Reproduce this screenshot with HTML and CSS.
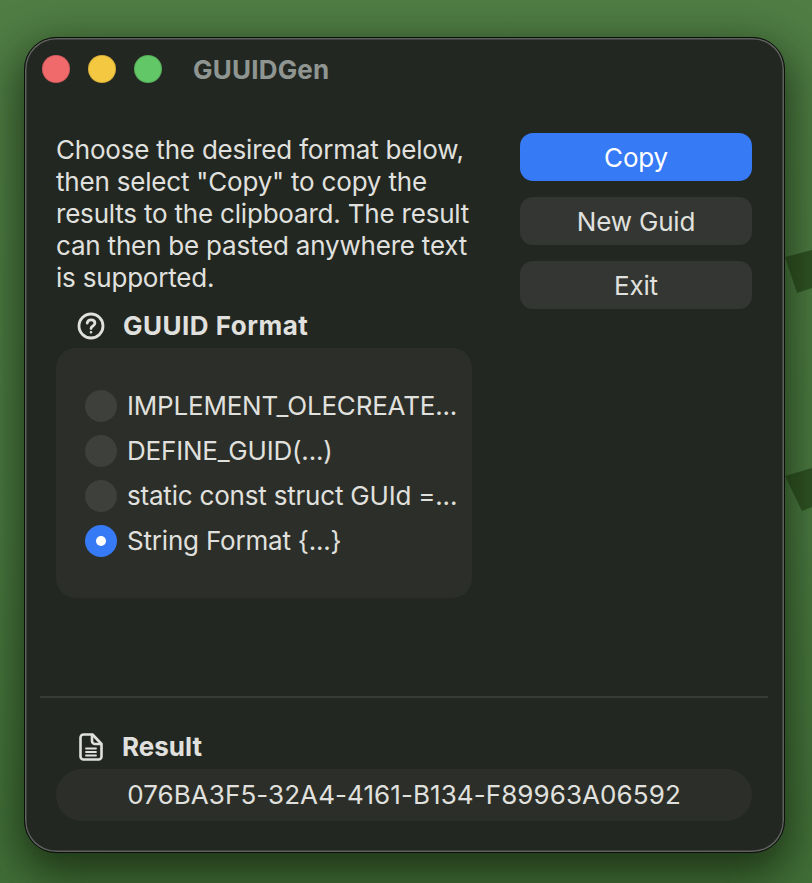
FILE: index.html
```html
<!DOCTYPE html>
<html lang="en">
<head>
<meta charset="utf-8">
<title>GUUIDGen</title>
<link rel="stylesheet" href="styles.css">
</head>
<body>
<svg class="shards" width="812" height="883" viewBox="0 0 812 883" aria-hidden="true">
  <polygon points="785,257 812,250 812,288 797,293"/>
  <polygon points="785,476 812,468 812,507 802,511"/>
</svg>
<main class="window">
  <header class="titlebar">
    <div class="lights">
      <span class="light red"></span>
      <span class="light yellow"></span>
      <span class="light green"></span>
    </div>
    <h1 class="title">GUUIDGen</h1>
  </header>
  <div class="content">
    <section class="left">
      <p class="intro">Choose the desired format below, then select "Copy" to copy the results to the clipboard. The result can then be pasted anywhere text is supported.</p>
      <div class="label format-label">
        <svg class="icon" width="28" height="28" viewBox="0 0 28 28" fill="none" stroke="#e0e1de" stroke-width="2.8" stroke-linecap="round" stroke-linejoin="round">
          <circle cx="14" cy="14" r="12"/>
          <path d="M10.200 11.200c.2-2.100 1.800-3.400 3.900-3.400 2.200 0 3.800 1.300 3.800 3.200 0 1.500-.8 2.300-2 3-1.200.7-1.900 1.300-1.900 2.600"/>
          <circle cx="14" cy="20.200" r=".6" fill="#e0e1de" stroke-width="1.400"/>
        </svg>
        <span>GUUID Format</span>
      </div>
      <div class="group">
        <div class="radio-row"><span class="radio"></span><span class="radio-text">IMPLEMENT_OLECREATE...</span></div>
        <div class="radio-row"><span class="radio"></span><span class="radio-text">DEFINE_GUID(...)</span></div>
        <div class="radio-row"><span class="radio"></span><span class="radio-text">static const struct GUId =...</span></div>
        <div class="radio-row"><span class="radio checked"></span><span class="radio-text">String Format {...}</span></div>
      </div>
    </section>
    <aside class="actions">
      <button class="btn primary">Copy</button>
      <button class="btn">New Guid</button>
      <button class="btn">Exit</button>
    </aside>
  </div>
  <hr class="divider">
  <section class="result">
    <div class="label result-label">
      <svg class="icon" width="24" height="28" viewBox="0 0 24 28" fill="none" stroke="#e0e1de" stroke-width="2.600" stroke-linecap="round" stroke-linejoin="round">
        <path d="M4.500 1.500h9l9 9.500v12.500a3 3 0 0 1-3 3h-15a3 3 0 0 1-3-3v-19a3 3 0 0 1 3-3z"/>
        <path d="M13 2v6a3 3 0 0 0 3 3h6"/>
        <path d="M7 15.500h10M7 19h10M7 22.500h10" stroke-width="1.800"/>
      </svg>
      <span>Result</span>
    </div>
    <div class="field">076BA3F5-32A4-4161-B134-F89963A06592</div>
  </section>
</main>
</body>
</html>
```
FILE: styles.css
```css
* { box-sizing: border-box; }
html, body { margin: 0; padding: 0; }
body {
  width: 812px;
  height: 883px;
  overflow: hidden;
  padding: 37px 0 0 24px;
  position: relative;
  font-family: Inter, "Liberation Sans", sans-serif;
  background: linear-gradient(180deg, #4f7d44 0%, #4b7a41 60%, #416f37 100%);
}
.shards { position: absolute; left: 0; top: 0; }
.shards polygon { fill: #2f5324; }
.window {
  position: relative;
  width: 761px;
  height: 816px;
  background: #232722;
  border: 1px solid #0c0e0c;
  border-radius: 32px;
  box-shadow: inset 0 0 0 1.500px #5e615d, 0 16px 44px 6px rgba(15, 30, 10, 0.7);
  color: #e0e1de;
}
.titlebar {
  height: 62px;
  padding: 17px 0 0 17px;
  display: flex;
  align-items: flex-start;
}
.lights { display: flex; gap: 18px; }
.light {
  width: 28px;
  height: 28px;
  border-radius: 50%;
  border: 1px solid rgba(0, 0, 0, 0.12);
}
.red { background: #f06a6b; }
.yellow { background: #f5c842; }
.green { background: #62c766; }
.title {
  margin: 1px 0 0 31px;
  font-size: 26px;
  line-height: 28px;
  font-weight: 700;
  letter-spacing: 0.2px;
  color: #8f9691;
}
.content {
  display: flex;
  gap: 48px;
  padding: 33px 0 0 31px;
  height: 596px;
}
.left { width: 416px; padding-top: 1px; }
.intro {
  margin: 0;
  font-size: 26px;
  line-height: 32px;
  letter-spacing: -0.2px;
}
.label {
  display: flex;
  align-items: center;
  font-size: 26px;
  font-weight: 700;
  line-height: 32px;
  color: #e0e1de;
}
.format-label { margin-top: 16px; padding-left: 21px; gap: 18px; letter-spacing: 0.5px; }
.group {
  margin-top: 6px;
  height: 250px;
  background: #2c2e2a;
  border-radius: 20px;
  padding: 42px 0 0 29px;
  display: flex;
  flex-direction: column;
  gap: 13px;
}
.radio-row { display: flex; align-items: center; gap: 10px; height: 32px; }
.radio {
  width: 32px;
  height: 32px;
  flex: none;
  border-radius: 50%;
  background: #3e403c;
  display: flex;
  align-items: center;
  justify-content: center;
}
.radio.checked { background: #367af6; }
.radio.checked::after {
  content: "";
  width: 10px;
  height: 10px;
  border-radius: 50%;
  background: #fff;
}
.radio-text { font-size: 26px; line-height: 32px; letter-spacing: -0.2px; white-space: nowrap; }
.actions { width: 232px; display: flex; flex-direction: column; gap: 16px; }
.btn {
  height: 48px;
  border: 0;
  border-radius: 13px;
  background: #333632;
  color: #e0e1de;
  font: 400 26px/32px Inter, "Liberation Sans", sans-serif;
  letter-spacing: -0.2px;
  padding: 2px 0 0;
}
.btn.primary { background: #367af6; color: #fff; }
.divider {
  margin: 0 16px 0 15px;
  height: 2px;
  border: 0;
  background: #383b37;
}
.result { padding: 33px 32px 0 31px; }
.result-label { padding-left: 23px; gap: 19px; }
.field {
  margin-top: 6px;
  height: 52px;
  border-radius: 26px;
  background: #2c2e2a;
  text-align: center;
  font-size: 26px;
  line-height: 52px;
  letter-spacing: 0.08px;
}
```
